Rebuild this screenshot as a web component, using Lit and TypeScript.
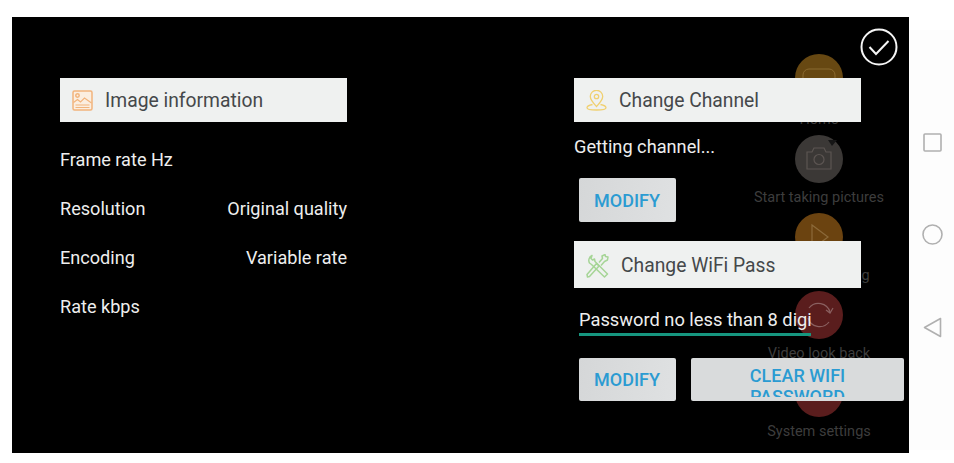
import { LitElement, html, css, svg } from "lit";
import { customElement } from "lit/decorators.js";

const menu = [
  { label: "Home", color: "#674812", icon: svg`<rect x="8" y="15" width="32" height="22" rx="6" fill="none" stroke="#8a6a30" stroke-width="1"/>` },
  { label: "Start taking pictures", color: "#3b3836", icon: svg`<path d="M12 17h5l2-4h10l2 4h5v17H12z" fill="none" stroke="#5c5552" stroke-width="1.2"/><circle cx="24" cy="24.500" r="5" fill="none" stroke="#5c5552" stroke-width="1.2"/><path d="M33 5h9l-5 6z" fill="#161616"/>` },
  { label: "Video recording", color: "#6b4310", icon: svg`<path d="M17 12l16 12-16 12z" fill="none" stroke="#8c6a3a" stroke-width="1.2"/>` },
  { label: "Video look back", color: "#5a1d1d", icon: svg`<path d="M35 21a12 12 0 0 0-21-4M13 27a12 12 0 0 0 21 4" fill="none" stroke="#8a6060" stroke-width="1.2"/><path d="M38 17l-3 5-4-3" fill="none" stroke="#8a6060" stroke-width="1.2"/>` },
  { label: "System settings", color: "#5a1d1d", icon: svg``, },
];

@customElement("app-root")
export class AppRoot extends LitElement {
  static styles = css`
    :host { display: block; width: 954px; height: 463px; background: #fff; font-family: Roboto, "Liberation Sans", sans-serif; overflow: hidden; }
    .page { display: flex; height: 463px; box-sizing: border-box; padding: 17px 0 10px 12px; }
    .screen { width: 897px; height: 436px; background: #000; display: grid; grid-template-columns: 1fr; }
    .layer { grid-area: 1 / 1; }
    .menu { display: flex; flex-direction: column; align-items: center; width: 160px; margin-left: 727px; padding-top: 37px; box-sizing: border-box; height: 436px; overflow: hidden; }
    .item { height: 78px; flex: none; display: flex; flex-direction: column; align-items: center; }
    .item:first-child { height: 81px; }
    .item:first-child .mlabel { margin-top: 8px; }
    .circle { width: 48px; height: 48px; flex: none; display: block; }
    .mlabel { font-size: 14.5px; line-height: 20px; margin-top: 5px; color: #3d3d3d; white-space: nowrap; }
    .panels { display: flex; padding: 61px 0 0 48px; align-items: flex-start; }
    .left { width: 287px; margin-right: 227px; flex: none; }
    .right { width: 330px; flex: none; }
    .head { display: flex; align-items: center; height: 44px; width: 287px; background: #eff1f0; color: #45484a; font-size: 19.3px; box-sizing: border-box; }
    .head.tall { height: 47px; margin-top: 19px; padding-top: 2px; }
    .head svg { flex: none; display: block; }
    .gap { margin-left: 12px; margin-right: 12px; }
    .wgap { margin-left: 11px; margin-right: 12px; }
    .rows { margin-top: 13px; }
    .row { display: flex; justify-content: space-between; align-items: flex-start; height: 49px; line-height: 50px; color: #eeeeee; font-size: 18.1px; }
    .status { margin-top: 13px; line-height: 24px; font-size: 18.2px; color: #eeeeee; }
    .btn { height: 44px; display: flex; flex-direction: column; align-items: center; border-radius: 2px; background: linear-gradient(100deg, #d5d7d8, #dfe1e2); color: #2b9bd2; font-size: 18px; font-weight: 500; box-sizing: border-box; flex: none; }
    .modify { width: 97px; justify-content: center; padding-right: 1px; }
    .clear { width: 213px; height: 43px; padding-top: 7px; background: #d9dbdc; }
    .clip { height: 32px; overflow: hidden; line-height: 21px; text-align: center; }
    .mod1 { margin: 19px 0 0 5px; }
    .input { margin: 20px 0 0 5px; width: 232px; border-bottom: 3px solid #16967f; padding-bottom: 1px; height: 24px; font-size: 18.3px; line-height: 24px; color: #eeeeee; white-space: nowrap; overflow: hidden; }
    .actions { display: flex; gap: 15px; margin: 22px 0 0 5px; }
    .actions .modify { height: 43px; }
    .nav { width: 45px; flex: none; display: flex; flex-direction: column; align-items: center; background: #fdfdfd; margin-top: 13px; height: 420px; padding: 103px 0 0 2px; box-sizing: border-box; }
    .nav svg { display: block; flex: none; }
    .nav .n2 { margin-top: 72px; }
    .nav .n3 { margin-top: 72px; }
    .check { justify-self: end; align-self: start; margin: 11px 11px 0 0; display: block; }
  `;

  private menuItems() {
    return menu.map(
      (m) => html`<div class="item">
        <svg class="circle" viewBox="0 0 48 48"><circle cx="24" cy="24" r="24" fill=${m.color}></circle>${m.icon}</svg>
        <div class="mlabel">${m.label}</div>
      </div>`
    );
  }

  render() {
    return html`<div class="page">
      <div class="screen">
        <div class="layer menu">${this.menuItems()}</div>
        <div class="layer panels">
          <div class="left">
            <div class="head">
              <svg class="gap" width="21" height="21" viewBox="0 0 21 21" fill="#fbeee0" stroke="#f2b47c" stroke-width="1.500">
                <rect x="1" y="1" width="19" height="19" rx="1.500"></rect>
                <circle cx="5.500" cy="5.500" r="1.700" fill="none"></circle>
                <path d="M1.500 12.500l4-3 3 2.500 4-4 7 5M3.500 15h14M3.500 17.500h14" fill="none" stroke-width="1.200"></path>
              </svg>
              <span>Image information</span>
            </div>
            <div class="rows">
              <div class="row"><span>Frame rate Hz</span></div>
              <div class="row"><span>Resolution</span><span>Original quality</span></div>
              <div class="row"><span>Encoding</span><span>Variable rate</span></div>
              <div class="row"><span>Rate kbps</span></div>
            </div>
          </div>
          <div class="right">
            <div class="head">
              <svg class="gap" width="21" height="21" viewBox="0 0 21 21" fill="none" stroke="#f0d070" stroke-width="1.300">
                <path d="M10.500 16.500C7 12.800 4.300 10 4.300 6.500a6.200 6.200 0 0 1 12.400 0c0 3.500-2.700 6.300-6.200 10z"></path>
                <circle cx="10.500" cy="6.500" r="2.200"></circle>
                <path d="M6.500 14.500C3 15.200 1 16.500 1 17.800 1 19.200 5 20 10.500 20s9.500-.8 9.500-2.200c0-1.300-2-2.600-5.500-3.300"></path>
              </svg>
              <span>Change Channel</span>
            </div>
            <div class="status">Getting channel...</div>
            <div class="btn modify mod1">MODIFY</div>
            <div class="head tall">
              <svg class="wgap" width="24" height="24" viewBox="0 0 24 24" fill="none" stroke="#a6d596" stroke-width="1.500" stroke-linejoin="round">
                <path d="M7 1.500C4 3 3 6.500 4.500 9l2 1.500L19.500 23l3-3L10 7.500 9.500 5 7.500 6 6 4.500z"></path>
                <path d="M2 20.500L2.500 23l2-.5L14 12l-2.500-2.500zM14 8.500l3.500-4L17 2l3-1.500.5 2 2.500.5-.5 3-3 1.500L16 11.500"></path>
              </svg>
              <span>Change WiFi Pass</span>
            </div>
            <div class="input">Password no less than 8 digits</div>
            <div class="actions">
              <div class="btn modify">MODIFY</div>
              <div class="btn clear"><div class="clip">CLEAR WIFI<br />PASSWORD</div></div>
            </div>
          </div>
        </div>
        <svg class="layer check" width="38" height="38" viewBox="0 0 38 38" fill="none" stroke="#f5f5f5" stroke-width="2">
          <circle cx="19" cy="19" r="17.500"></circle>
          <path d="M9.500 19l6.500 7L28.500 13"></path>
        </svg>
      </div>
      <div class="nav">
        <svg width="19" height="19" viewBox="0 0 19 19" fill="none" stroke="#b0b0b0" stroke-width="1.600"><rect x="1" y="1" width="17" height="17" rx="1"></rect></svg>
        <svg class="n2" width="21" height="21" viewBox="0 0 21 21" fill="none" stroke="#b0b0b0" stroke-width="1.600"><circle cx="10.500" cy="10.500" r="9.500"></circle></svg>
        <svg class="n3" width="19" height="21" viewBox="0 0 19 21" fill="none" stroke="#b0b0b0" stroke-width="1.600"><path d="M17.500 1.500v18L1.500 10.500z" stroke-linejoin="round"></path></svg>
      </div>
    </div>`;
  }
}
